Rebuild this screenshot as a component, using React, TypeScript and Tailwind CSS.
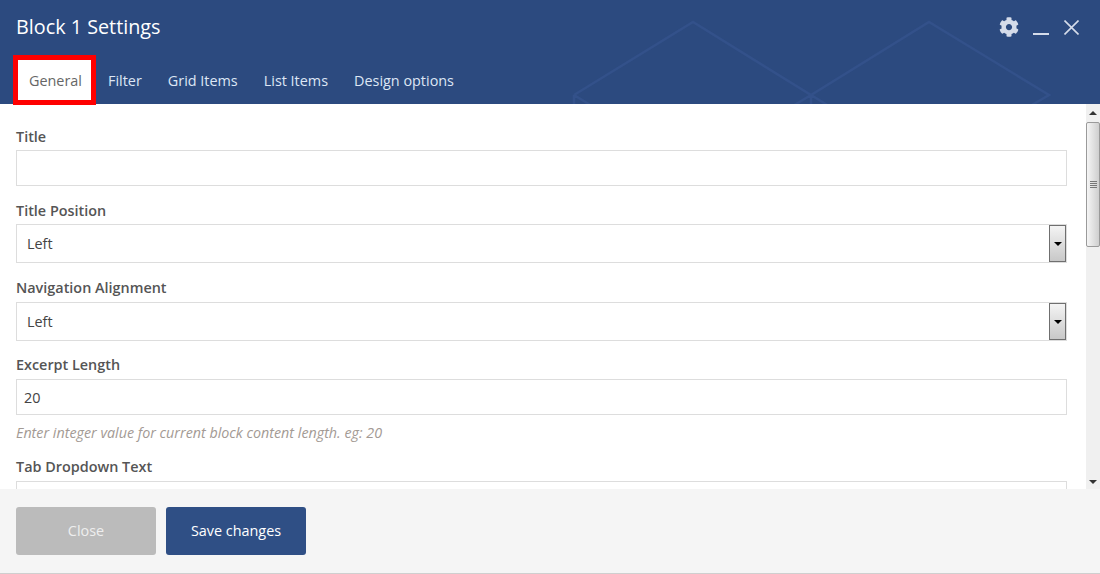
import { FaCog } from "react-icons/fa";

const Label = ({ children }: { children: string }) => (
    <label className="block h-[19px] text-[14.4px] leading-[19px] font-semibold text-[#555555]">{children}</label>
);

const Select = () => (
    <div className="flex h-[39px] items-center justify-between border border-[#dddddd] bg-white pl-[10px] text-[14.4px] text-[#444444]">
        <span>Left</span>
        <div className="flex h-[37px] w-[17px] items-center justify-center border border-[#6f6f6f] bg-gradient-to-b from-[#f4f4f4] to-[#c8c8c8]">
            <div className="h-0 w-0 border-x-[4px] border-t-[4px] border-x-transparent border-t-black" />
        </div>
    </div>
);

const Scrollbar = () => (
    <div className="flex h-full w-[14px] flex-col bg-[#f0f0f0]">
        <div className="flex h-[18px] shrink-0 items-center justify-center">
            <div className="h-0 w-0 border-x-[4px] border-b-[4px] border-x-transparent border-b-[#333333]" />
        </div>
        <div className="flex h-[125px] shrink-0 flex-col items-center justify-center gap-px rounded-[2px] border border-[#9a9a9a] bg-gradient-to-r from-[#f5f5f5] to-[#cfcfcf]">
            <div className="h-px w-[7px] bg-[#777777]" />
            <div className="h-px w-[7px] bg-[#777777]" />
            <div className="h-px w-[7px] bg-[#777777]" />
            <div className="h-px w-[7px] bg-[#777777]" />
        </div>
        <div className="flex flex-1 items-end justify-center pb-[5px]">
            <div className="h-0 w-0 border-x-[4px] border-t-[4px] border-x-transparent border-t-[#333333]" />
        </div>
    </div>
);

const App = () => {
    return (
        <div className="flex h-[574px] w-[1100px] flex-col overflow-hidden bg-white font-['Open_Sans',sans-serif]">
            {/* header */}
            <div className="relative h-[104px] shrink-0 bg-[#2c4a7f]">
                <svg className="absolute left-0 top-0" width="1100" height="104" fill="none" stroke="#33518a" strokeWidth="2.5">
                    <path d="M574 95 L693 22 L811 95 L929 22 L1049 95 L1020 112" />
                    <path d="M574 95 L600 111 M574 95 V110 M811 95 L783 112 M811 95 L837 111 M811 95 V110" />
                </svg>
                <div className="relative flex h-[55px] items-center justify-between pb-px pl-4 pr-[21px]">
                    <h1 className="mb-[2px] text-[19.8px] leading-[27px] text-white">Block 1 Settings</h1>
                    <div className="flex items-center">
                        <FaCog className="text-[20px] text-[#d5dcea]" />
                        <div className="ml-[14px] mt-[13px] h-[2px] w-[16px] bg-[#d5dcea]" />
                        <svg className="ml-[15px]" width="15" height="15" viewBox="0 0 15 15" stroke="#d5dcea" strokeWidth="1.6">
                            <path d="M0.5 0.5 L14.5 14.5 M14.5 0.5 L0.5 14.5" />
                        </svg>
                    </div>
                </div>
                <div className="relative flex pl-[13px] text-[14.4px] text-[#dde6f5]">
                    <div className="z-10 flex h-[50px] w-[83px] items-center border-[5px] border-[#ff0000] bg-white pl-[11px] pt-[2px] text-[#666666]">General</div>
                    <div className="flex h-[50px] items-center pl-[12px] pr-[13px] pt-[2px]">Filter</div>
                    <div className="flex h-[50px] items-center px-[13px] pt-[2px]">Grid Items</div>
                    <div className="flex h-[50px] items-center px-[13px] pt-[2px]">List Items</div>
                    <div className="flex h-[50px] items-center px-[13px] pt-[2px]">Design options</div>
                </div>
            </div>

            {/* form */}
            <div className="flex min-h-0 flex-1">
                <div className="min-w-0 flex-1 overflow-hidden pl-4 pr-[19px] pt-[23px]">
                    <Label>Title</Label>
                    <div className="mt-[4px] h-[36px] border border-[#dddddd] bg-white" />
                    <div className="mt-[15px]">
                        <Label>Title Position</Label>
                        <div className="mt-[4px]">
                            <Select />
                        </div>
                    </div>
                    <div className="mt-[15px]">
                        <Label>Navigation Alignment</Label>
                        <div className="mt-[5px]">
                            <Select />
                        </div>
                    </div>
                    <div className="mt-[14px]">
                        <Label>Excerpt Length</Label>
                        <div className="mt-[5px] flex h-[36px] items-center border border-[#dddddd] bg-white pl-[7px] pt-px text-[14.4px] text-[#444444]">20</div>
                    </div>
                    <p className="mt-[8px] h-[20px] text-[14.3px] leading-[20px] italic text-[#a39a94]">Enter integer value for current block content length. eg: 20</p>
                    <div className="mt-[14px]">
                        <Label>Tab Dropdown Text</Label>
                        <div className="mt-[5px] h-[36px] border border-[#dddddd] bg-white" />
                    </div>
                </div>
                <Scrollbar />
            </div>

            {/* footer */}
            <div className="flex h-[85px] shrink-0 gap-[10px] border-b border-[#cfcfcf] bg-[#f5f5f5] pl-4 pt-[18px]">
                <button className="h-[48px] w-[140px] rounded-[3px] bg-[#bbbbbb] pb-px text-[14.4px] text-[#eeeeee]">Close</button>
                <button className="h-[48px] w-[140px] rounded-[3px] bg-[#2f4f85] pb-px text-[14.4px] text-white">Save changes</button>
            </div>
        </div>
    );
};

export default App;
